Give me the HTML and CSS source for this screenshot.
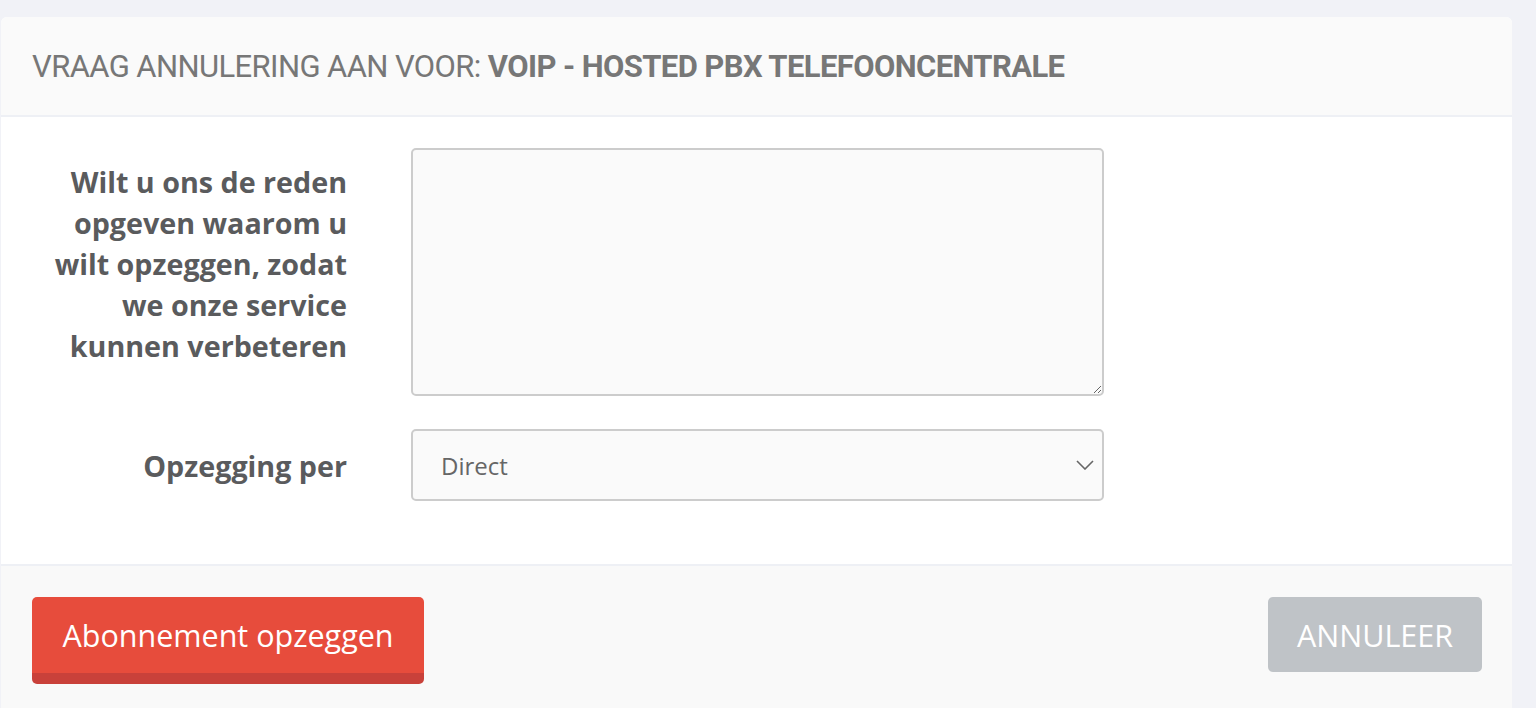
FILE: index.html
```html
<!DOCTYPE html>
<html lang="nl">
<head>
<meta charset="utf-8">
<title>Vraag annulering aan</title>
<link rel="stylesheet" href="styles.css">
</head>
<body>
<div class="page">
  <div class="card">
    <div class="card-header">
      <h3 class="title">VRAAG ANNULERING AAN VOOR: <strong>VOIP - HOSTED PBX TELEFOONCENTRALE</strong></h3>
    </div>
    <div class="card-body">
      <form class="form">
        <label class="label label-multi" for="reason">Wilt u ons de reden opgeven waarom u wilt opzeggen, zodat we onze service kunnen verbeteren</label>
        <textarea id="reason" class="textarea"></textarea>
        <label class="label label-single" for="when">Opzegging per</label>
        <div class="select-wrap">
          <select id="when" class="select">
            <option>Direct</option>
          </select>
          <svg class="chevron" width="18" height="10" viewBox="0 0 18 10"><path d="M1 1 L9 9 L17 1" fill="none" stroke="#666" stroke-width="1.6"/></svg>
        </div>
      </form>
    </div>
    <div class="card-footer">
      <button class="btn btn-danger" type="button">Abonnement opzeggen</button>
      <button class="btn btn-cancel" type="button">ANNULEER</button>
    </div>
  </div>
</div>
</body>
</html>
```

FILE: styles.css
```css
html, body {
  margin: 0;
  padding: 0;
  background: #f1f2f7;
  height: 100%;
  overflow: hidden;
}
.page {
  padding: 17px 24px 0 1px;
}
.card {
  background: #ffffff;
  border-radius: 6px 6px 0 0;
  overflow: hidden;
}
.card-header {
  background: #fafafa;
  height: 98px;
  display: flex;
  align-items: center;
  padding-left: 31px;
  border-bottom: 2px solid #eef0f5;
}
.title {
  margin: 0;
  font-family: "Roboto", "Liberation Sans", sans-serif;
  font-weight: 400;
  font-size: 31px;
  letter-spacing: -0.6px;
  color: #777777;
}
.title strong {
  font-weight: 700;
}
.card-body {
  padding: 31px 0 63px 0;
}
.form {
  display: grid;
  grid-template-columns: 346px 693px;
  column-gap: 64px;
  row-gap: 33px;
}
.label {
  font-family: "Open Sans", "Liberation Sans", sans-serif;
  font-weight: 700;
  font-size: 28.7px;
  line-height: 41px;
  color: #5a5b5d;
  text-align: right;
  justify-self: end;
}
.label-multi {
  width: 310px;
  padding-top: 13px;
}
.label-single {
  align-self: center;
}
.textarea {
  box-sizing: border-box;
  height: 248px;
  width: 100%;
  margin: 0;
  border: 2px solid #cccccc;
  border-radius: 5px;
  background: #fafafa;
  resize: vertical;
  font-family: "Open Sans", sans-serif;
}
.select-wrap {
  position: relative;
}
.select {
  box-sizing: border-box;
  width: 100%;
  height: 72px;
  margin: 0;
  padding: 0 28px;
  border: 2px solid #cccccc;
  border-radius: 5px;
  background: #fafafa;
  appearance: none;
  -webkit-appearance: none;
  font-family: "Open Sans", sans-serif;
  font-size: 24px;
  color: #666666;
}
.chevron {
  position: absolute;
  right: 10px;
  top: 31px;
  pointer-events: none;
}
.card-footer {
  background: #f9f9f9;
  border-top: 2px solid #eef0f5;
  padding: 31px 30px 40px 31px;
  display: flex;
  justify-content: space-between;
  align-items: flex-start;
}
.btn {
  border: none;
  border-radius: 5px;
  font-family: "Open Sans", sans-serif;
  font-size: 30.5px;
  color: #ffffff;
  cursor: pointer;
  margin: 0;
}
.btn-danger {
  background: #e74c3c;
  width: 392px;
  height: 87px;
  border-bottom: 11px solid #c9413a;
  padding: 0;
}
.btn-cancel {
  background: #bfc3c7;
  width: 214px;
  height: 75px;
  padding: 0;
}
```
